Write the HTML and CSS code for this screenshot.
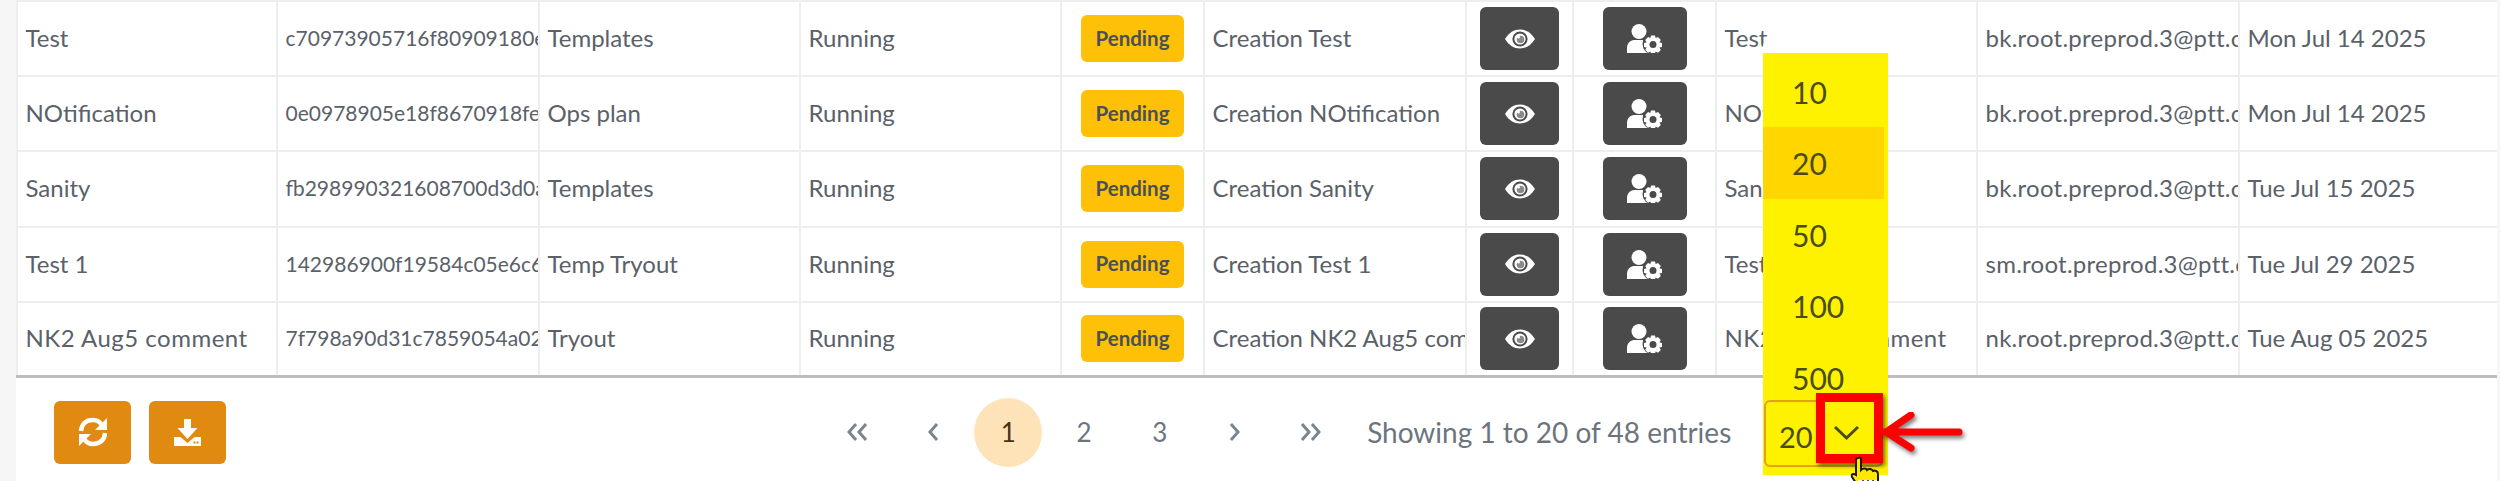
FILE: index.html
```html
<!DOCTYPE html>
<html lang="en">
<head>
<meta charset="utf-8">
<title>Entries</title>
<link rel="stylesheet" href="styles.css">
</head>
<body>
<svg class="defs" width="0" height="0" aria-hidden="true">
  <symbol id="eye" viewBox="0 0 30 20">
    <path d="M0 10C4 3.500 9 .5 15 .5S26 3.500 30 10C26 16.500 21 19.500 15 19.500S4 16.500 0 10Z" fill="#fff"/>
    <circle cx="15" cy="10" r="7.600" fill="#4a4a4a"/>
    <circle cx="15" cy="10" r="5.600" fill="#fff"/>
    <circle cx="15.500" cy="10.500" r="3.800" fill="#8a8a8a"/>
    <circle cx="13.500" cy="8" r="1.500" fill="#fff"/>
  </symbol>
  <symbol id="usergear" viewBox="0 0 36 29">
    <circle cx="12" cy="7.500" r="7.500" fill="#fff"/>
    <path d="M0 29V24C0 18.500 4 16 8 16H16C19 16 21 17 22.500 19V29Z" fill="#fff"/>
    <circle cx="26" cy="20" r="10.500" fill="#4a4a4a"/>
    <g fill="#fff">
      <path d="M24 11.500h4l.6 2.600 2.400-1 2.800 2.800-1.400 2.300 2.600.8v4l-2.600.6 1.400 2.300-2.800 2.800-2.400-1.300-.6 2.600h-4l-.6-2.600-2.400 1.300-2.800-2.800 1.400-2.300-2.600-.6v-4l2.600-.8-1.400-2.300 2.800-2.800 2.400 1Z"/>
    </g>
    <circle cx="26" cy="20.500" r="3.500" fill="#4a4a4a"/>
  </symbol>
</svg>

<main class="panel">
  <section class="grid">
    <div class="row">
      <div class="cell">Test</div>
      <div class="cell id">c70973905716f80909180e3a1</div>
      <div class="cell">Templates</div>
      <div class="cell">Running</div>
      <div class="cell center"><span class="badge">Pending</span></div>
      <div class="cell">Creation Test</div>
      <div class="cell center"><button class="btn eye"><svg width="30" height="20"><use href="#eye"/></svg></button></div>
      <div class="cell center"><button class="btn gear"><svg width="36" height="29"><use href="#usergear"/></svg></button></div>
      <div class="cell">Test</div>
      <div class="cell mail">bk.root.preprod.3@ptt.com</div>
      <div class="cell">Mon Jul 14 2025</div>
    </div>
    <div class="row">
      <div class="cell">NOtification</div>
      <div class="cell id">0e0978905e18f8670918fe2c4</div>
      <div class="cell">Ops plan</div>
      <div class="cell">Running</div>
      <div class="cell center"><span class="badge">Pending</span></div>
      <div class="cell">Creation NOtification</div>
      <div class="cell center"><button class="btn eye"><svg width="30" height="20"><use href="#eye"/></svg></button></div>
      <div class="cell center"><button class="btn gear"><svg width="36" height="29"><use href="#usergear"/></svg></button></div>
      <div class="cell">NOtification</div>
      <div class="cell mail">bk.root.preprod.3@ptt.com</div>
      <div class="cell">Mon Jul 14 2025</div>
    </div>
    <div class="row">
      <div class="cell">Sanity</div>
      <div class="cell id">fb298990321608700d3d0a7e1</div>
      <div class="cell">Templates</div>
      <div class="cell">Running</div>
      <div class="cell center"><span class="badge">Pending</span></div>
      <div class="cell">Creation Sanity</div>
      <div class="cell center"><button class="btn eye"><svg width="30" height="20"><use href="#eye"/></svg></button></div>
      <div class="cell center"><button class="btn gear"><svg width="36" height="29"><use href="#usergear"/></svg></button></div>
      <div class="cell">Sanity</div>
      <div class="cell mail">bk.root.preprod.3@ptt.com</div>
      <div class="cell">Tue Jul 15 2025</div>
    </div>
    <div class="row">
      <div class="cell">Test 1</div>
      <div class="cell id">142986900f19584c05e6c6b82</div>
      <div class="cell">Temp Tryout</div>
      <div class="cell">Running</div>
      <div class="cell center"><span class="badge">Pending</span></div>
      <div class="cell">Creation Test 1</div>
      <div class="cell center"><button class="btn eye"><svg width="30" height="20"><use href="#eye"/></svg></button></div>
      <div class="cell center"><button class="btn gear"><svg width="36" height="29"><use href="#usergear"/></svg></button></div>
      <div class="cell">Test 1</div>
      <div class="cell mail">sm.root.preprod.3@ptt.com</div>
      <div class="cell">Tue Jul 29 2025</div>
    </div>
    <div class="row last">
      <div class="cell wide">NK2 Aug5 comment</div>
      <div class="cell id">7f798a90d31c7859054a02e9d</div>
      <div class="cell">Tryout</div>
      <div class="cell">Running</div>
      <div class="cell center"><span class="badge">Pending</span></div>
      <div class="cell">Creation NK2 Aug5 comment</div>
      <div class="cell center"><button class="btn eye"><svg width="30" height="20"><use href="#eye"/></svg></button></div>
      <div class="cell center"><button class="btn gear"><svg width="36" height="29"><use href="#usergear"/></svg></button></div>
      <div class="cell wide">NK2 Aug5 comment</div>
      <div class="cell mail">nk.root.preprod.3@ptt.com</div>
      <div class="cell">Tue Aug 05 2025</div>
    </div>
  </section>

  <footer class="footer">
    <div class="tools">
      <button class="tool">
        <svg width="30" height="30" viewBox="0 0 30 30" fill="none" stroke="#fff" stroke-width="4.500">
          <path d="M3 14C3.500 7 8 3 15 3C19 3 22 5 24 8"/>
          <path d="M27 16C26.500 23 22 27 15 27C11 27 8 25 6 22"/>
          <path d="M29 1V13H17Z" fill="#fff" stroke="none"/>
          <path d="M1 29V17H13Z" fill="#fff" stroke="none"/>
        </svg>
      </button>
      <button class="tool">
        <svg width="27" height="27" viewBox="0 0 27 27">
          <path d="M10 0H17V9H23.500L13.500 20L3.500 9H10Z" fill="#fff"/>
          <path d="M0 18H6.500L13.500 24L20.500 18H27V27H0Z" fill="#fff"/>
          <rect x="19.500" y="22.500" width="2" height="2" fill="#e08a12"/>
          <rect x="22.500" y="22.500" width="2" height="2" fill="#e08a12"/>
        </svg>
      </button>
    </div>
    <nav class="pager">
      <span class="page"><svg width="22" height="18" viewBox="0 0 22 18" class="chev"><path d="M10 1L3 9L10 17M20 1L13 9L20 17"/></svg></span>
      <span class="page"><svg width="12" height="18" viewBox="0 0 12 18" class="chev"><path d="M10 1L3 9L10 17"/></svg></span>
      <span class="page current">1</span>
      <span class="page">2</span>
      <span class="page">3</span>
      <span class="page"><svg width="12" height="18" viewBox="0 0 12 18" class="chev"><path d="M2 1L9 9L2 17"/></svg></span>
      <span class="page"><svg width="22" height="18" viewBox="0 0 22 18" class="chev"><path d="M2 1L9 9L2 17M12 1L19 9L12 17"/></svg></span>
    </nav>
    <span class="info">Showing 1 to 20 of 48 entries</span>
    <div class="picker">
      <div class="menu">
        <div class="opt">10</div>
        <div class="opt on">20</div>
        <div class="opt">50</div>
        <div class="opt">100</div>
        <div class="opt">500</div>
      </div>
      <div class="select">
        <span class="value">20</span>
        <svg class="caret" width="27" height="16" viewBox="0 0 27 16"><path d="M2 2L13.500 13L25 2"/></svg>
      </div>
      <div class="callout"></div>
      <svg class="arrow" width="84" height="40" viewBox="0 0 84 40">
        <path d="M4 20H78M30 3L5 20L30 36" />
      </svg>
      <svg class="hand" width="30" height="34" viewBox="0 0 30 34">
        <path d="M8 2C10 1 11 2 11 4V14C13 12 16 12 17 14C19 12 22 13 23 15C25 14 28 15 28 18V26C27 30 25 32 22 33H12C9 32 6 27 2 21C1 18 3 17 6 19V4C6 3 7 2 8 2Z" fill="#ffe900" stroke="#1c1c00" stroke-width="2"/>
        <path d="M8 24L13 33H23L27 24Z" fill="#fff"/>
        <path d="M13 24V33M18 24V33M23 24V33" stroke="#1c1c00" stroke-width="1.500"/>
      </svg>
    </div>
  </footer>
</main>
</body>
</html>
```

FILE: styles.css
```css
* { box-sizing: border-box; }
html, body { margin: 0; height: 481px; overflow: hidden; }
body {
  background: #f6f6f6;
  font-family: "Lato", "Liberation Sans", sans-serif;
  color: #5a6169;
  font-size: 24px;
}
.defs { position: absolute; }
.panel {
  margin-left: 16px;
  width: 2481px;
  height: 481px;
  background: #fff;
  border-top: 2px solid #eeeeee;
}
.row {
  display: grid;
  grid-template-columns: 260px 262px 261px 261px 143px 262px 107px 143px 261px 262px 1fr;
  height: 75.2px;
  border-bottom: 2px solid #eeeeee;
}
.row.last { border-bottom: 3px solid #bdbdbd; }
.cell {
  display: flex;
  align-items: center;
  padding: 0 0 2px 7.500px;
  border-left: 2px solid #eeeeee;
  overflow: hidden;
  white-space: nowrap;
  min-width: 0;
}
.cell.id { font-size: 21px; }
.cell.mail { letter-spacing: .25px; }
.cell.wide { letter-spacing: .5px; }
.cell.center { justify-content: center; padding: 0; }
.badge {
  display: flex;
  align-items: center;
  justify-content: center;
  width: 103px;
  height: 47px;
  padding-bottom: 2px;
  background: #ffc107;
  border-radius: 6px;
  color: #4a5058;
  font-weight: 700;
  font-size: 20.500px;
}
.btn {
  display: flex;
  align-items: center;
  justify-content: center;
  height: 63px;
  padding: 0;
  background: #4a4a4a;
  border: 0;
  border-radius: 6px;
}
.btn.eye { width: 79px; }
.btn.gear { width: 84px; }
.footer {
  position: relative;
  display: flex;
  align-items: center;
  height: 101px;
  padding: 8px 0 0 38px;
}
.tools { display: flex; gap: 18px; }
.tool {
  display: flex;
  align-items: center;
  justify-content: center;
  width: 77px;
  height: 63px;
  padding: 0;
  background: #e08a12;
  border: 0;
  border-radius: 6px;
}
.pager {
  display: flex;
  gap: 7.700px;
  margin-left: 597px;
  color: #6c757d;
  font-size: 26px;
}
.page {
  display: flex;
  align-items: center;
  justify-content: center;
  width: 68px;
  height: 69px;
  border-radius: 50%;
}
.page.current { background: #ffe3b8; color: #4a3210; }
.chev { fill: none; stroke: #7b858e; stroke-width: 3; }
.info { margin-left: 22px; font-size: 28px; color: #6c757d; white-space: nowrap; }
.picker {
  position: absolute;
  left: 1748px;
  top: 22px;
  width: 119px;
  height: 67px;
}
.menu {
  position: absolute;
  left: -1px;
  bottom: -8px;
  width: 125px;
  height: 422px;
  padding-top: 3px;
  background: #fff200;
  color: #4b4b16;
  font-size: 30px;
}
.menu::before {
  content: "";
  position: absolute;
  left: 0;
  top: -11px;
  width: 120px;
  height: 11px;
  background: #fff;
  border-radius: 4px 4px 0 0;
}
.opt {
  display: flex;
  align-items: center;
  height: 71.500px;
  width: 121px;
  padding-left: 29px;
}
.opt.on { background: #ffd600; }
.select {
  position: absolute;
  inset: 0;
  display: flex;
  align-items: center;
  padding: 6px 0 0 13px;
  border: 2px solid #e2a21a;
  border-radius: 6px;
  color: #4b4b16;
  font-size: 29px;
}
.caret {
  position: absolute;
  left: 67px;
  top: 23px;
  fill: none;
  stroke: #4b4b16;
  stroke-width: 3;
}
.callout {
  position: absolute;
  left: 52px;
  top: -7px;
  width: 67px;
  height: 70px;
  border: 9px solid #ff0000;
  box-shadow: 2px 3px 4px rgba(0,0,0,.55);
}
.arrow {
  position: absolute;
  left: 117px;
  top: 12px;
  fill: none;
  stroke: #ff0000;
  stroke-width: 7;
  stroke-linecap: round;
  filter: drop-shadow(2px 3px 2px rgba(0,0,0,.5));
}
.hand {
  position: absolute;
  left: 86px;
  top: 56px;
}
```
